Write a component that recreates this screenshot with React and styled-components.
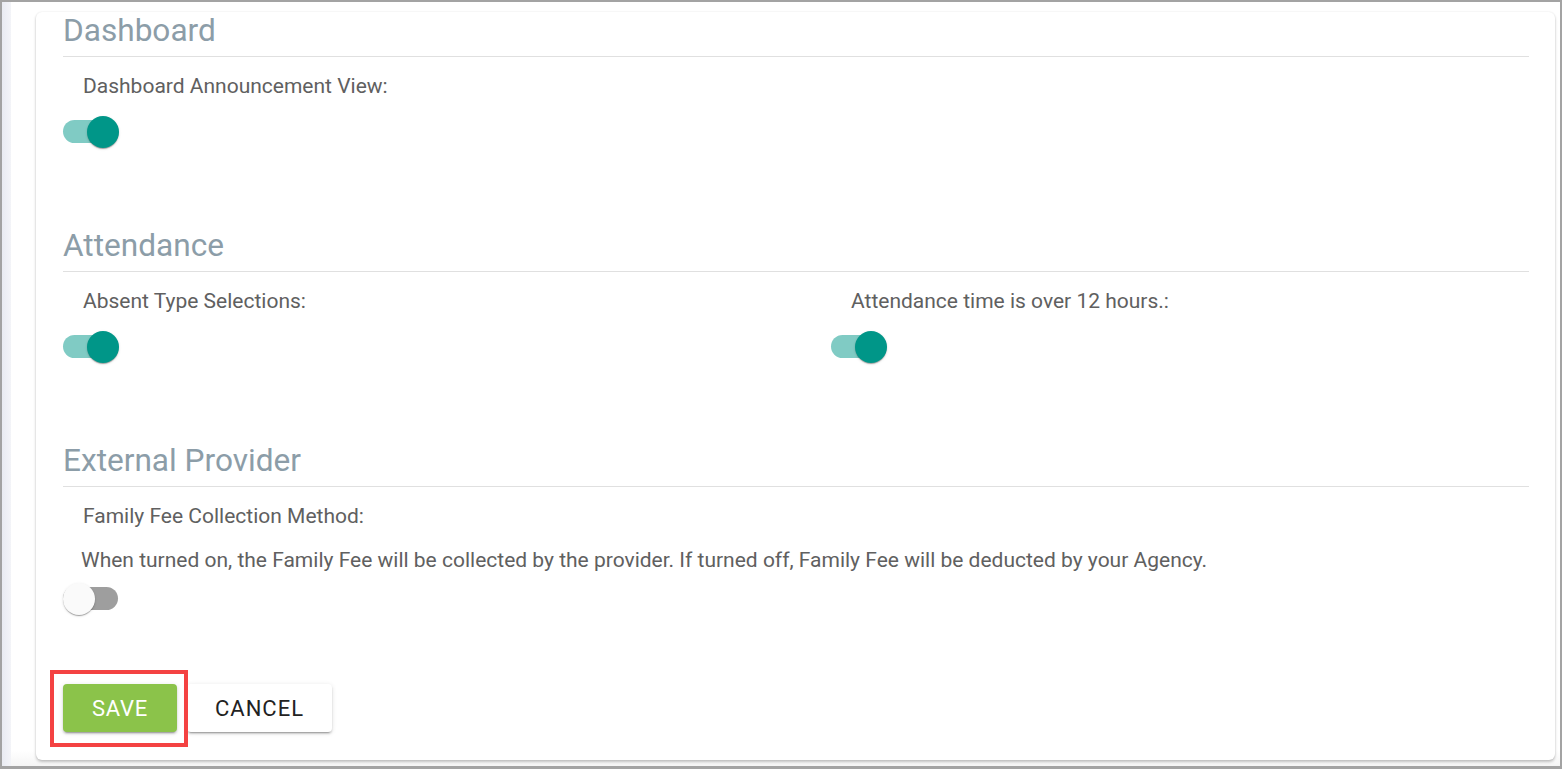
import React, { useState } from "react";
import styled, { createGlobalStyle } from "styled-components";

const GlobalStyle = createGlobalStyle`
  html, body {
    margin: 0;
    padding: 0;
    background: #fff;
  }
  body {
    font-family: Roboto, "Liberation Sans", Arial, sans-serif;
  }
`;

const Frame = styled.div`
  width: 1562px;
  height: 769px;
  box-sizing: border-box;
  border: 2px solid #a3a3a3;
  border-bottom-width: 3px;
  display: flex;
  overflow: hidden;
  background: #fff;
`;

const SideStrip = styled.div`
  width: 9px;
  flex-shrink: 0;
  background: linear-gradient(to right, #e9ebf2, #f3f4f8);
`;

const Main = styled.div`
  flex: 1;
  display: flex;
  flex-direction: column;
  justify-content: flex-end;
  padding: 0 5px 6px 25px;
  background: linear-gradient(to bottom, #fff 0, #fff 98%, #f5f5f5 100%);
`;

const Card = styled.div`
  background: #fff;
  border-radius: 6px;
  box-shadow: 0 2px 3px rgba(0, 0, 0, 0.22), 0 0 2px rgba(0, 0, 0, 0.1);
  padding: 0 26px 28px 27px;
`;

const Section = styled.section`
  display: flex;
  flex-direction: column;
  margin-bottom: ${(p) => p.$gap || 79}px;
`;

const SectionTitle = styled.h2`
  margin: 0;
  font-weight: 400;
  font-size: 31.6px;
  line-height: 38px;
  color: #8c9da8;
  padding-bottom: 6px;
  border-bottom: 1px solid #e0e0e0;
`;

const Columns = styled.div`
  display: grid;
  grid-template-columns: 768px 1fr;
`;

const Field = styled.div`
  display: flex;
  flex-direction: column;
  align-items: flex-start;
`;

const Label = styled.div`
  font-size: 21px;
  line-height: 26px;
  color: #606060;
  margin: 16px 0 0 20px;
`;

const Hint = styled.div`
  font-size: 21px;
  line-height: 26px;
  color: #606060;
  margin: 18px 0 0 18px;
`;

const SwitchBox = styled.button`
  position: relative;
  width: 56px;
  height: 32px;
  padding: 0;
  border: none;
  background: transparent;
  cursor: pointer;
  margin-top: ${(p) => p.$top || 17}px;
`;

const Track = styled.span`
  position: absolute;
  left: 0;
  top: 4px;
  width: 55px;
  height: 23px;
  border-radius: 12px;
  background: ${(p) => (p.$on ? "#80cbc4" : "#9e9e9e")};
`;

const Thumb = styled.span`
  position: absolute;
  top: 0;
  left: ${(p) => (p.$on ? 24 : 0)}px;
  width: 32px;
  height: 32px;
  border-radius: 50%;
  background: ${(p) => (p.$on ? "#009688" : "#fafafa")};
  box-shadow: 0 2px 1px -1px rgba(0, 0, 0, 0.2), 0 1px 1px 0 rgba(0, 0, 0, 0.14),
    0 1px 3px 0 rgba(0, 0, 0, 0.12);
  transition: left 0.15s;
`;

const Actions = styled.div`
  display: flex;
  gap: 10px;
`;

const Button = styled.button`
  position: relative;
  height: 48px;
  width: ${(p) => (p.$primary ? 114 : 145)}px;
  padding: 0;
  border: none;
  border-radius: 4px;
  font-family: Roboto, "Liberation Sans", Arial, sans-serif;
  font-size: 22px;
  letter-spacing: ${(p) => (p.$primary ? 0.8 : 1)}px;
  text-transform: uppercase;
  cursor: pointer;
  background: ${(p) => (p.$primary ? "#8bc34a" : "#fff")};
  color: ${(p) => (p.$primary ? "#fff" : "#222")};
  box-shadow: 0 3px 1px -2px rgba(0, 0, 0, 0.2), 0 2px 2px 0 rgba(0, 0, 0, 0.14),
    0 1px 5px 0 rgba(0, 0, 0, 0.12);

  &::after {
    content: "";
    display: ${(p) => (p.$highlight ? "block" : "none")};
    position: absolute;
    left: -13px;
    right: -11px;
    top: -14px;
    bottom: -15px;
    border: 4px solid #f44242;
    pointer-events: none;
    z-index: 1;
  }
`;

const Switch = ({ on, onToggle, top }) => (
  <SwitchBox $top={top} onClick={onToggle} aria-pressed={on}>
    <Track $on={on} />
    <Thumb $on={on} />
  </SwitchBox>
);

export default function App() {
  const [announce, setAnnounce] = useState(true);
  const [absent, setAbsent] = useState(true);
  const [overTwelve, setOverTwelve] = useState(true);
  const [familyFee, setFamilyFee] = useState(false);

  return (
    <>
      <GlobalStyle />
      <Frame>
        <SideStrip />
        <Main>
          <Card>
            <Section>
              <SectionTitle>Dashboard</SectionTitle>
              <Field>
                <Label>Dashboard Announcement View:</Label>
                <Switch on={announce} onToggle={() => setAnnounce(!announce)} />
              </Field>
            </Section>

            <Section>
              <SectionTitle>Attendance</SectionTitle>
              <Columns>
                <Field>
                  <Label>Absent Type Selections:</Label>
                  <Switch on={absent} onToggle={() => setAbsent(!absent)} />
                </Field>
                <Field>
                  <Label>Attendance time is over 12 hours.:</Label>
                  <Switch on={overTwelve} onToggle={() => setOverTwelve(!overTwelve)} />
                </Field>
              </Columns>
            </Section>

            <Section $gap={69}>
              <SectionTitle>External Provider</SectionTitle>
              <Field>
                <Label>Family Fee Collection Method:</Label>
                <Hint>
                  When turned on, the Family Fee will be collected by the provider. If turned off, Family Fee will be deducted by your Agency.
                </Hint>
                <Switch on={familyFee} top={10} onToggle={() => setFamilyFee(!familyFee)} />
              </Field>
            </Section>

            <Actions>
              <Button $primary $highlight>Save</Button>
              <Button>Cancel</Button>
            </Actions>
          </Card>
        </Main>
      </Frame>
    </>
  );
}
